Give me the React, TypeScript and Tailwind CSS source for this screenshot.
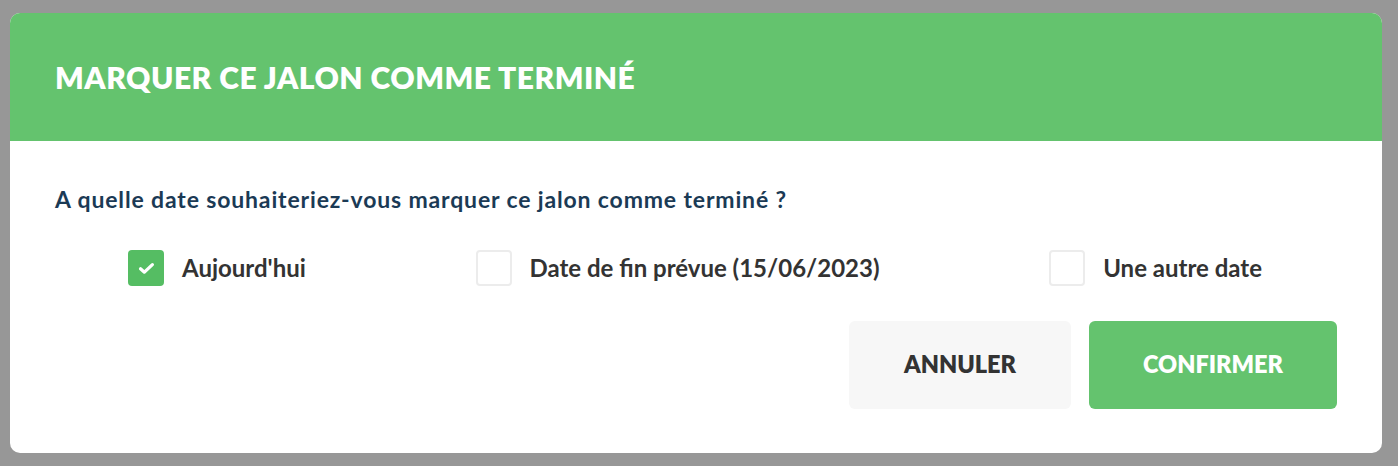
import { useState } from "react";

type Option = { id: string; label: string };

const options: Option[] = [
  { id: "today", label: "Aujourd'hui" },
  { id: "planned", label: "Date de fin prévue (15/06/2023)" },
  { id: "other", label: "Une autre date" },
];

const CheckIcon = () => (
  <svg width="17" height="13" viewBox="0 0 17 13" fill="none">
    <path d="M2.5 6.8 L6.4 10.2 L14.4 2.6" stroke="white" strokeWidth="3.2" strokeLinecap="round" strokeLinejoin="round" />
  </svg>
);

export default function App() {
  const [selected, setSelected] = useState("today");

  return (
    <div
      className="w-full h-screen bg-[#979797] pt-[13px] pl-[10px] pr-[16px] overflow-hidden"
      style={{ fontFamily: "Lato, 'Noto Sans', sans-serif" }}
    >
      <div className="bg-white rounded-[10px] overflow-hidden w-[1372px] h-[440px] flex flex-col">
        <div className="h-[128px] bg-[#64c36e] flex items-center px-[45px]">
          <h1 className="text-white font-extrabold text-[30px] tracking-[0.5px] uppercase">
            Marquer ce jalon comme terminé
          </h1>
        </div>

        <div className="px-[45px] pt-[46px] flex flex-col">
          <p className="text-[#1b3a55] font-bold text-[23px] tracking-[0.85px] leading-[24px]">
            A quelle date souhaiteriez-vous marquer ce jalon comme terminé ?
          </p>

          <div className="flex items-center justify-between pl-[73px] pr-[75px] mt-[39px]">
            {options.map((opt) => {
              const checked = selected === opt.id;
              return (
                <label
                  key={opt.id}
                  className="flex items-center gap-[18px] cursor-pointer"
                  onClick={() => setSelected(opt.id)}
                >
                  <span
                    className={
                      checked
                        ? "w-[36px] h-[36px] rounded-[4px] bg-[#55bd63] flex items-center justify-center"
                        : "w-[36px] h-[36px] rounded-[4px] border-2 border-[#ececec] bg-white"
                    }
                  >
                    {checked && <CheckIcon />}
                  </span>
                  <span className="text-[#333333] font-bold text-[24px] leading-[36px]">{opt.label}</span>
                </label>
              );
            })}
          </div>

          <div className="flex justify-end gap-[18px] mt-[35px]">
            <button className="w-[222px] h-[88px] rounded-[6px] bg-[#f7f7f7] text-[#333333] font-extrabold text-[23.5px] uppercase">
              Annuler
            </button>
            <button className="w-[248px] h-[88px] rounded-[6px] bg-[#64c36e] text-white font-extrabold text-[23.5px] uppercase">
              Confirmer
            </button>
          </div>
        </div>
      </div>
    </div>
  );
}
